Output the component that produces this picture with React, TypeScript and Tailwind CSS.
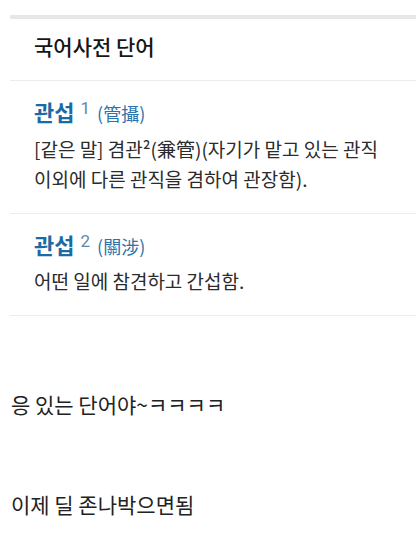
import React from "react";

const font = { fontFamily: '"Noto Sans CJK KR", "Noto Sans", sans-serif' };

function Entry({ num, hanja, children }: { num: string; hanja: string; children: React.ReactNode }) {
  return (
    <div className="pl-[24px] pr-[20px] pt-[15px] pb-[19px] border-b border-[#ececef]">
      <div className="flex items-baseline">
        <span className="text-[22px] font-bold text-[#1c6aa3] leading-[30px]">관섭</span>
        <span className="ml-[6px] text-[17px] text-[#5f88a8] relative -top-[7px]" style={{ fontFamily: "Roboto, sans-serif" }}>{num}</span>
        <span className="ml-[7px] text-[18px] text-[#2a74ab]">({hanja})</span>
      </div>
      <div className="mt-[5px] text-[19px] leading-[30px] text-[#2b2b2b]">{children}</div>
    </div>
  );
}

export default function App() {
  return (
    <div className="w-[420px] h-[559px] bg-white overflow-hidden" style={font}>
      <div className="pt-[15px] pl-[10px] pr-[4px]">
        <div className="border-t-[4px] border-[#e7e7ea]">
          <div className="h-[62px] flex items-center pb-[6px] px-[24px] border-b border-[#ececef]">
            <span className="text-[21px] font-medium text-[#161616]">국어사전 단어</span>
          </div>
          <Entry num="1" hanja="管攝">
            [같은 말] 겸관²(兼管)(자기가 맡고 있는 관직 이외에 다른 관직을 겸하여 관장함).
          </Entry>
          <Entry num="2" hanja="關涉">
            어떤 일에 참견하고 간섭함.
          </Entry>
        </div>
      </div>
      <div className="px-[11px] text-[21px] text-[#222]">
        <p className="mt-[75px] leading-[26px]">응 있는 단어야~ㅋㅋㅋㅋ</p>
        <p className="mt-[74px] leading-[26px]">이제 딜 존나박으면됨</p>
      </div>
    </div>
  );
}
